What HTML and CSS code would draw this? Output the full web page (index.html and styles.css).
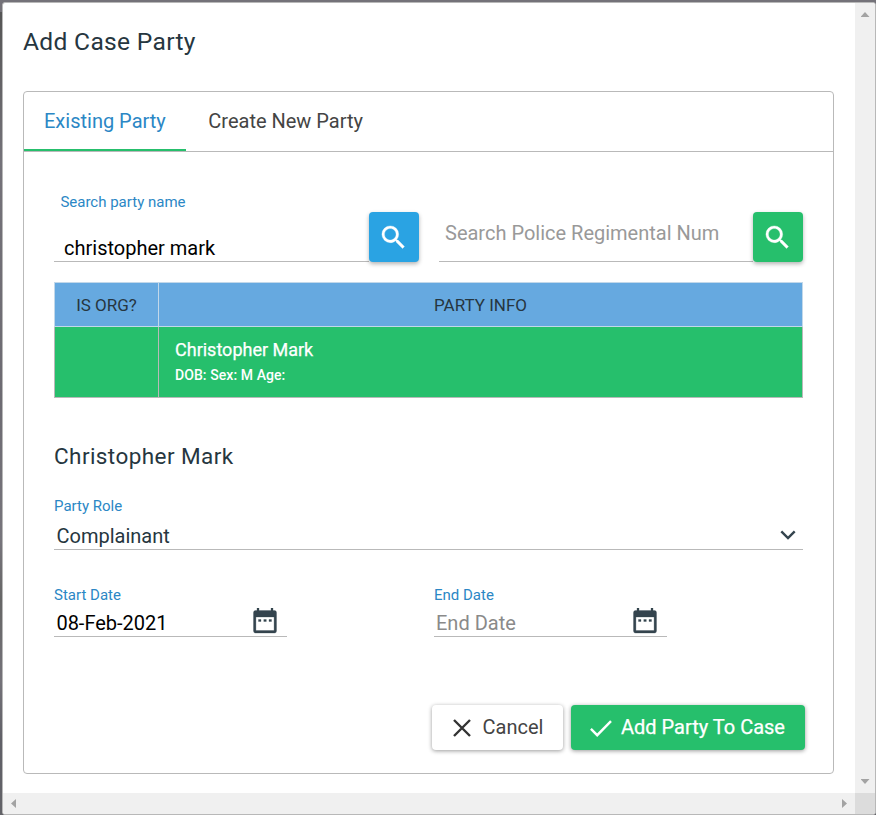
FILE: index.html
```html
<!DOCTYPE html>
<html lang="en">
<head>
<meta charset="utf-8">
<title>Add Case Party</title>
<link rel="stylesheet" href="styles.css">
</head>
<body>
<div class="dialog">
  <div class="content">
    <h1 class="title"><span>Add Case Party</span></h1>
    <section class="card">
      <nav class="tabs">
        <div class="tab active"><span>Existing Party</span></div>
        <div class="tab"><span>Create New Party</span></div>
      </nav>
      <div class="panel">
        <div class="search-row">
          <div class="search-field">
            <label class="label search-label">Search party name</label>
            <div class="search-value"><span>christopher mark</span></div>
          </div>
          <button class="icon-btn blue"><svg viewBox="0 0 24 24"><path d="M15.5 14h-.79l-.28-.27A6.471 6.471 0 0 0 16 9.500 6.500 6.500 0 1 0 9.500 16c1.610 0 3.090-.59 4.230-1.570l.27.28v.79l5 4.990L20.490 19l-4.990-5zm-6 0C7.010 14 5 11.990 5 9.500S7.010 5 9.500 5 14 7.010 14 9.500 11.990 14 9.500 14z"/></svg></button>
          <div class="search-field second">
            <div class="placeholder"><span>Search Police Regimental Num</span></div>
          </div>
          <button class="icon-btn green"><svg viewBox="0 0 24 24"><path d="M15.5 14h-.79l-.28-.27A6.471 6.471 0 0 0 16 9.500 6.500 6.500 0 1 0 9.500 16c1.610 0 3.090-.59 4.230-1.570l.27.28v.79l5 4.990L20.490 19l-4.990-5zm-6 0C7.010 14 5 11.990 5 9.500S7.010 5 9.500 5 14 7.010 14 9.500 11.990 14 9.500 14z"/></svg></button>
        </div>
        <div class="grid">
          <div class="th"><span>IS ORG?</span></div>
          <div class="th"><span>PARTY INFO</span></div>
          <div class="td"></div>
          <div class="td info">
            <div class="name"><span>Christopher Mark</span></div>
            <div class="meta"><span>DOB: Sex: M Age:</span></div>
          </div>
        </div>
        <h2 class="party"><span>Christopher Mark</span></h2>
        <label class="label">Party Role</label>
        <div class="select">
          <span>Complainant</span>
          <svg class="chevron" viewBox="0 0 16 10"><path d="M1.300 1.300 8 8l6.700-6.700"/></svg>
        </div>
        <div class="dates">
          <div class="date">
            <label class="label">Start Date</label>
            <div class="date-value"><span>08-Feb-2021</span>
              <svg class="cal" viewBox="0 0 24 26"><path fill-rule="evenodd" d="M4 0h2v2.500h12V0h2v2.500h1.500A2 2 0 0 1 23.500 4.500v18.500a2 2 0 0 1-2 2h-19a2 2 0 0 1-2-2V4.500a2 2 0 0 1 2-2H4zM2.900 9v13.500h18.200V9zM5.500 11.500h2.500v2h-2.500zM10.800 11.500h2.500v2h-2.500zM16 11.500h2.500v2H16z"/></svg>
            </div>
          </div>
          <div class="date">
            <label class="label">End Date</label>
            <div class="date-value empty"><span>End Date</span>
              <svg class="cal" viewBox="0 0 24 26"><path fill-rule="evenodd" d="M4 0h2v2.500h12V0h2v2.500h1.500A2 2 0 0 1 23.500 4.500v18.500a2 2 0 0 1-2 2h-19a2 2 0 0 1-2-2V4.500a2 2 0 0 1 2-2H4zM2.900 9v13.500h18.200V9zM5.500 11.500h2.500v2h-2.500zM10.800 11.500h2.500v2h-2.500zM16 11.500h2.500v2H16z"/></svg>
            </div>
          </div>
        </div>
        <div class="actions">
          <button class="btn cancel"><svg class="x" viewBox="0 0 18 18"><path d="M1 1l16 16M17 1L1 17"/></svg><span>Cancel</span></button>
          <button class="btn add"><svg class="check" viewBox="0 0 22 17"><path d="M.9 8.900l6.300 6.300L21 1.200"/></svg><span>Add Party To Case</span></button>
        </div>
      </div>
    </section>
  </div>
  <div class="vbar"><i class="arrow up"></i><i class="arrow down"></i></div>
  <div class="hbar"><i class="arrow left"></i><i class="arrow right"></i></div>
  <div class="corner"></div>
</div>
</body>
</html>
```

FILE: styles.css
```css
* { box-sizing: border-box; }
body {
  margin: 0;
  width: 876px;
  height: 815px;
  overflow: hidden;
  padding: 2px 0 0 2px;
  background: linear-gradient(#747279 0 12px, #555 12px, #747279 160px, #6d6b72 400px, #77757c 540px, #666 600px, #747279 680px, #606067 740px, #626267 815px);
  font-family: Roboto, sans-serif;
  font-size: 20px;
  color: #263640;
}
h1, h2 { margin: 0; font-weight: 400; }
button { border: 0; padding: 0; font: inherit; }
.dialog {
  width: 874px;
  height: 813px;
  border: 1px solid #b8b8b8;
  border-radius: 3px;
  background: #fff;
  overflow: hidden;
  display: grid;
  grid-template: 790px 21px / 852px 20px;
}
.content { padding: 0 21px 0 20px; }
.title { height: 88px; padding-top: 23px; font-size: 24.6px; line-height: 32px; letter-spacing: .3px; }
.card { height: 683px; border: 1px solid #b9b9b9; border-radius: 4px; }
.tabs { height: 60px; border-bottom: 1px solid #b9b9b9; display: flex; }
.tab { height: 59px; padding: 0 20px; line-height: 59px; color: #444; }
.tab.active { width: 162px; color: #2b87c5; border-bottom: 2px solid #26bf6c; }
.tab + .tab { padding-left: 22.3px; }
.panel { padding: 0 30px; }
.label { display: block; font-size: 15px; line-height: 18px; color: #2b87c5; }
.search-row { display: flex; height: 110px; align-items: flex-end; }
.search-field { width: 315px; height: 77px; border-bottom: 1px solid #b9b9b9; }
.search-label { padding: 8px 0 0 6.4px; }
.search-value { padding: 25px 0 0 10px; line-height: 24px; color: #000; }
.second { width: 314px; margin-left: 20px; }
.placeholder { padding: 36px 0 0 6px; line-height: 24px; color: #999; }
.icon-btn { width: 50px; height: 50px; border-radius: 4px; box-shadow: 0 2px 4px rgba(0,0,0,.3); display: flex; align-items: center; justify-content: center; }
.icon-btn svg { width: 31px; height: 31px; fill: #fff; stroke: #fff; stroke-width: .25; margin-right: 1px; }
.blue { background: #2aa3e3; }
.green { background: #26bf6c; }
.grid { margin-top: 20px; display: grid; grid-template: 45px 71px / 104px 645px; width: 749px; }
.th { background: #66a9e0; border: 1px solid #c2d8ea; border-width: 1px 0 1px 1px; font-size: 17px; text-align: center; line-height: 45px; }
.th + .th { border-right-width: 1px; }
.td { background: #26bf6c; border: 1px solid #b9b9b9; border-width: 0 0 1px 1px; color: #fff; }
.info { border-right-width: 1px; padding: 11px 16px 0; }
.name { font-size: 18px; line-height: 24px; -webkit-text-stroke: .25px; }
.meta { font-size: 14px; line-height: 18px; padding-top: 4px; font-weight: 500; letter-spacing: .08px; }
.party { height: 99px; padding-top: 43px; font-size: 22.5px; line-height: 30px; letter-spacing: .42px; }
.select { height: 35px; border-bottom: 1px solid #b9b9b9; padding: 8px 7px 0 2.5px; display: flex; align-items: center; justify-content: space-between; }
.chevron { width: 16px; height: 10px; fill: none; stroke: #34444e; stroke-width: 2.4; margin-top: -2px; }
.dates { display: flex; gap: 147px; padding-top: 36px; }
.date { width: 233px; }
.date-value { height: 33px; border-bottom: 1px solid #b9b9b9; padding: 5px 10px 0 2.4px; display: flex; align-items: center; justify-content: space-between; color: #000; }
.date-value.empty { color: #8a8a8a; padding-left: 2px; }
.cal { width: 24px; height: 26px; fill: #34444e; stroke: #34444e; stroke-width: .3; margin-top: -4px; }
.actions { display: flex; gap: 8px; padding-top: 68px; margin-right: -2px; justify-content: flex-end; }
.btn { height: 45px; border-radius: 4px; box-shadow: 0 1px 4px rgba(0,0,0,.4); display: flex; align-items: center; }
.btn span { margin-top: -1px; }
.cancel { width: 131px; padding-left: 21px; gap: 11.5px; background: #fff; color: #444; }
.add { width: 234px; padding-left: 19px; gap: 9px; background: #26bf6c; color: #fff; -webkit-text-stroke: .25px; }
.btn svg { fill: none; stroke: currentColor; stroke-width: 2.4; flex: none; }
.x { width: 18px; height: 18px; color: #333; }
.check { width: 22px; height: 17px; margin-top: 1px; }
.vbar { background: #f0f0f0; display: flex; flex-direction: column; justify-content: space-between; align-items: center; padding: 9px 0; }
.hbar { background: #f0f0f0; display: flex; justify-content: space-between; align-items: center; padding: 0 8px; }
.corner { background: #dcdcdc; }
.arrow { background: #a3a3a3; }
.up, .down { width: 9px; height: 5px; }
.left, .right { width: 5px; height: 9px; }
.up { clip-path: polygon(50% 0, 100% 100%, 0 100%); }
.down { clip-path: polygon(0 0, 100% 0, 50% 100%); }
.left { clip-path: polygon(0 50%, 100% 0, 100% 100%); }
.right { clip-path: polygon(0 0, 100% 50%, 0 100%); }
```
